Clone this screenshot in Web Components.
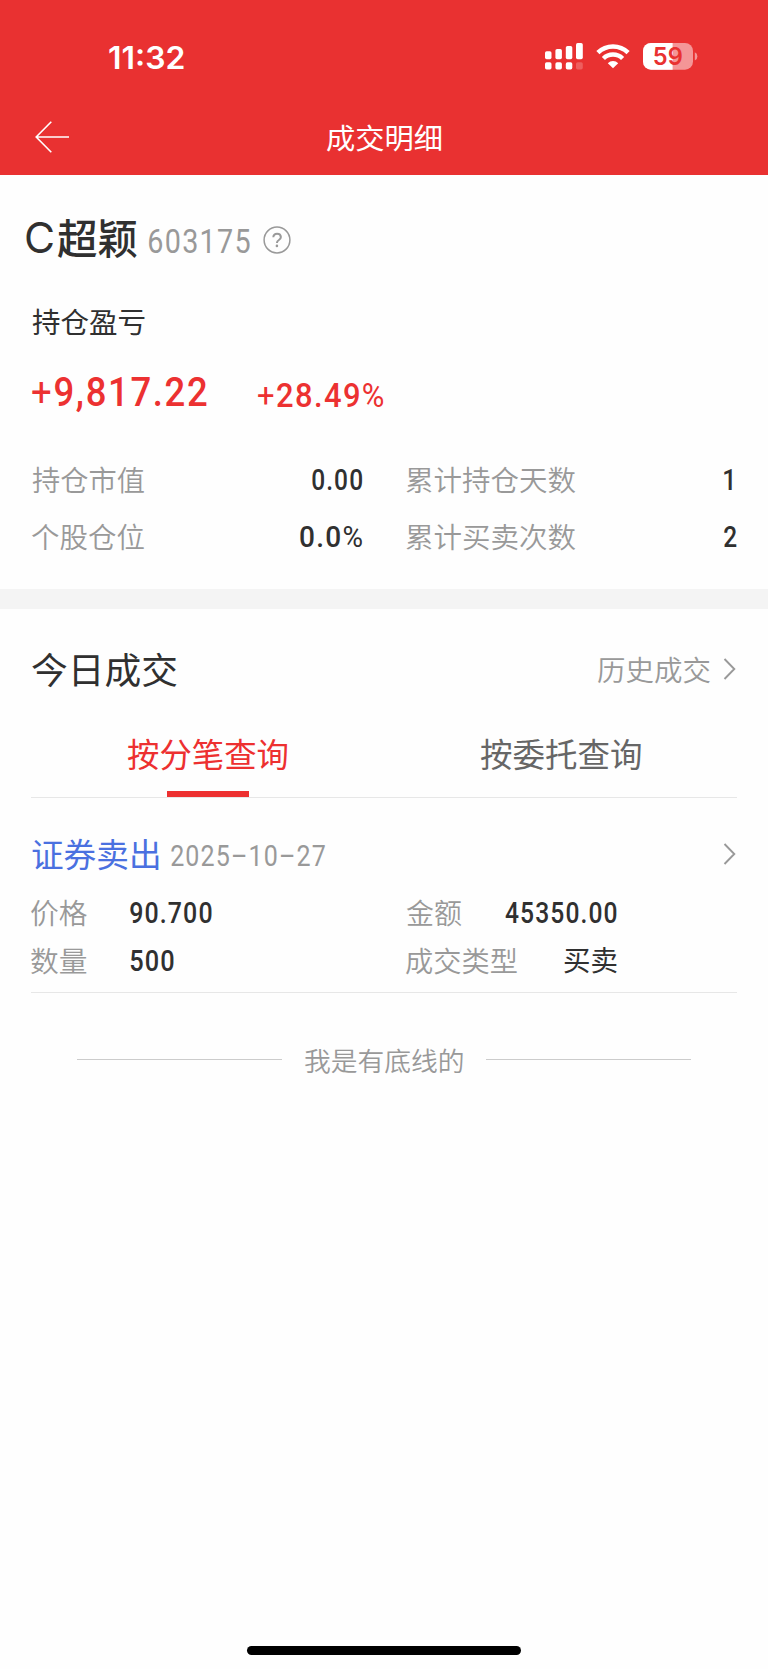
<!DOCTYPE html>
<html lang="zh-CN">
<head>
<meta charset="utf-8">
<title>成交明细</title>
<style>
html,body{margin:0;background:#fefefe}
body{font-family:"Noto Sans CJK SC",sans-serif;color:#303030}
</style>
</head>
<body>
<trade-page></trade-page>
<script>
const define = (name, html, ready) => {
  const t = document.createElement('template');
  t.innerHTML = html;
  customElements.define(name, class extends HTMLElement {
    connectedCallback() {
      if (this.shadowRoot) return;
      this.attachShadow({mode: 'open'}).append(t.content.cloneNode(true));
      if (ready) ready(this, this.shadowRoot);
    }
  });
};

// Text whose visible glyphs span exactly `w` pixels; `up` nudges the baseline.
const pen = document.createElement('canvas').getContext('2d');
define('fit-text', `<style>
:host{display:block;flex:none;white-space:nowrap;line-height:1.4}
span{display:inline-block;transform-origin:0 50%}
::slotted(b){font-weight:400}
</style><span><slot></slot></span>`, (el, root) => {
  const span = root.querySelector('span');
  const num = el.hasAttribute('num');
  const family = el.getAttribute('face') || (num ? 'Roboto' : 'Noto Sans CJK SC');
  const weight = el.getAttribute('weight') || (num ? '500' : '400');
  const size = +el.getAttribute('size');
  const w = +el.getAttribute('w');
  const gap = num ? size * 0.045 : 0;
  el.style.font = `${weight} ${size}px/1.4 "${family}","Noto Sans CJK SC",sans-serif`;
  span.style.letterSpacing = gap + 'px';
  pen.font = `${weight} ${size}px "${family}","Noto Sans CJK SC",sans-serif`;
  const m = pen.measureText(el.textContent);
  const k = w / (m.actualBoundingBoxLeft + m.actualBoundingBoxRight + gap * (el.textContent.length - 1));
  el.style.width = w + 'px';
  const up = +(el.getAttribute('up') || (num ? -0.8 : size * 0.02));
  span.style.transform = `translate(${m.actualBoundingBoxLeft * k}px,${-up}px) scaleX(${k})`;
});

define('chevron-icon', `<style>:host{display:block;flex:none;width:13px;height:22px}svg{display:block}</style>
<svg width="13" height="22" viewBox="0 0 13 22" fill="none" stroke="#999" stroke-width="1.9"><path d="M1.5 1 11.3 11 1.5 21"/></svg>`);

define('status-bar', `<style>
:host{display:flex;height:100px;box-sizing:border-box;padding:15px 69px 0 108.5px;align-items:center;justify-content:space-between;color:#fff}
.icons{display:flex;align-items:center;height:28px;margin-top:-2px}
svg{display:block}
.sig{margin-right:13px}.wifi{margin-right:13px}
</style>
<fit-text face="Inter" weight="600" size="31" w="75" up="0.5">11:32</fit-text>
<div class="icons">
<svg class="sig" width="38" height="27" fill="#fff"><rect x="0" y="8.3" width="6.5" height="8" rx="1.7"/><rect x="10.4" y="6" width="6.5" height="10.3" rx="1.7"/><rect x="20.8" y="3" width="6.5" height="13.3" rx="1.7"/><rect x="31" y="0" width="6.8" height="16.3" rx="1.7"/><rect x="0" y="19.2" width="6.5" height="7.3" rx="1.7"/><rect x="10.4" y="19.2" width="6.5" height="7.3" rx="1.7"/><rect x="20.8" y="19.2" width="6.5" height="7.3" rx="1.7"/><rect x="31" y="19.2" width="6.8" height="7.3" rx="1.7" opacity=".22"/></svg>
<svg class="wifi" width="34" height="27" viewBox="0 0 34 27" fill="none" stroke="#fff" stroke-width="4.5"><path d="M1.9 9.6A21.6 21.6 0 0 1 32.1 9.6"/><path d="M7.4 15.5A13.7 13.7 0 0 1 26.6 15.5"/><path d="M17 25.3 11.8 20.2A7.4 7.4 0 0 1 22.2 20.2Z" fill="#fff" stroke="none"/></svg>
<svg width="56" height="27" viewBox="0 0 56 27"><defs><clipPath id="b"><rect width="50" height="26.7" rx="8"/></clipPath></defs><g clip-path="url(#b)"><rect width="50" height="27" fill="#f49697"/><rect width="29.6" height="27" fill="#fff"/></g><path d="M51.8 9.2q2.6 1 2.6 4.2t-2.6 4.2z" fill="#f49697"/><text x="24.8" y="21.9" text-anchor="middle" font-family="Inter" font-weight="600" font-size="24" textLength="30" lengthAdjust="spacingAndGlyphs" fill="#e93131">59</text></svg>
</div>`);

define('nav-bar', `<style>
:host{display:grid;grid-template-columns:1fr auto 1fr;height:75px;box-sizing:border-box;padding:0 35px;align-items:center;color:#fff}
svg{display:block;margin-top:-1px}
</style>
<svg width="35" height="32" viewBox="0 0 35 32" fill="none" stroke="#fff" stroke-width="1.6"><path d="M16.3.8 1.2 16 16.3 31.2M1 16H34"/></svg>
<fit-text size="28.5" w="114.5">成交明细</fit-text><span></span>`);

define('stock-title', `<style>
:host{display:flex;align-items:center;height:126px;padding-left:26px}
.c{margin-right:4.3px}.n{margin-right:12px}.q{margin:4px 0 0 13px;display:block}
.code{color:#999;padding-top:6px}
</style>
<fit-text class="c" face="Inter" weight="400" size="42.5" w="27" up="-0.3">C</fit-text>
<fit-text class="n" weight="500" size="41" w="80" up="0.6">超颖</fit-text>
<fit-text class="code" num weight="400" size="33.3" w="101">603175</fit-text>
<svg class="q" width="28" height="28" viewBox="0 0 28 28" fill="none" stroke="#999"><circle cx="14" cy="14" r="12.9" stroke-width="1.5"/><path d="M10.3 11.3q.2-3.6 3.8-3.6t3.8 3.4q0 1.7-2 2.9-2 1.2-2 3" stroke-width="2"/><circle cx="13.9" cy="19.9" r="1.3" fill="#999" stroke="none"/></svg>`);

define('profit-summary', `<style>
:host{display:block;padding:0 31.5px}
.h{display:flex;align-items:center;height:41px}
.v{display:flex;align-items:center;height:100px;color:#ec3131}
.p{margin-left:52.5px;padding-top:6px}
</style>
<div class="h"><fit-text size="28.5" w="112.5">持仓盈亏</fit-text></div>
<div class="v"><fit-text num size="41.3" w="174" up="-1.4"><b>+</b>9,817.22</fit-text><fit-text class="p" num size="33" w="125"><b>+</b>28.49<b>%</b></fit-text></div>`);

define('stat-grid', `<style>
:host{display:grid;grid-template-columns:331px 331px;column-gap:43px;grid-auto-rows:57px;padding:9px 31.5px 24px;height:114px}
div{display:flex;justify-content:space-between;align-items:center}
.l{color:#999}
.one{margin-right:4px}
</style>
<div><fit-text class="l" size="28.5" weight="350" w="112.5">持仓市值</fit-text><fit-text num size="29.4" w="50.5">0.00</fit-text></div>
<div><fit-text class="l" size="28.5" weight="350" w="169.5">累计持仓天数</fit-text><fit-text class="one" num size="29.4" w="8.5">1</fit-text></div>
<div><fit-text class="l" size="28.5" weight="350" w="112.5">个股仓位</fit-text><fit-text num size="29.4" w="62.5">0.0<b>%</b></fit-text></div>
<div><fit-text class="l" size="28.5" weight="350" w="169.5">累计买卖次数</fit-text><fit-text num size="29.4" w="12.5">2</fit-text></div>`);

define('section-head', `<style>
:host{display:flex;align-items:center;justify-content:space-between;height:120px;padding:0 32px}
div{display:flex;align-items:center;color:#999;gap:12.5px}
</style>
<fit-text size="36.5" w="144.5" up="0.2">今日成交</fit-text>
<div><fit-text size="28.5" weight="350" w="112.5" up="-0.4">历史成交</fit-text><chevron-icon></chevron-icon></div>`);

define('query-tabs', `<style>
:host{display:grid;grid-template-columns:1fr 1fr;margin:0 31px;height:68px;border-bottom:1px solid #e7e7e7}
div{display:grid;grid-template-rows:50px 12px 6px;justify-items:center;align-items:center;color:#666}
.on{color:#ed3030}
i{grid-row:3;width:82px;height:6px;background:#ed3030;display:block}
</style>
<div class="on"><fit-text size="32.5" w="160.5">按分笔查询</fit-text><i></i></div>
<div><fit-text size="32.5" w="161">按委托查询</fit-text></div>`);

define('trade-record', `<style>
:host{display:block;margin:0 31px;border-bottom:1px solid #e7e7e7;height:194px}
.top{display:flex;align-items:center;height:72px;padding-top:20px}
.t{color:#4a70e0;margin:0 12.5px 0 .7px}.d{color:#999;padding-top:3px}
chevron-icon{margin:0 1px 0 auto}
.g{display:grid;grid-template-columns:374.5px 211px;grid-auto-rows:48px;margin-top:-1px}
.g div{display:flex;align-items:center}
.g div:nth-child(even){justify-content:space-between}
.l{color:#999}
.g div:nth-child(odd) .l{margin-right:42.5px}
</style>
<div class="top"><fit-text class="t" size="32.5" w="127">证券卖出</fit-text><fit-text class="d" num weight="400" size="29" w="154.5">2025–10–27</fit-text><chevron-icon></chevron-icon></div>
<div class="g">
<div><fit-text class="l" size="28.5" weight="350" w="56">价格</fit-text><fit-text num size="29.4" w="82">90.700</fit-text></div>
<div><fit-text class="l" size="28.5" weight="350" w="55.5">金额</fit-text><fit-text num size="29.4" w="112">45350.00</fit-text></div>
<div><fit-text class="l" size="28.5" weight="350" w="56">数量</fit-text><fit-text num size="29.4" w="44">500</fit-text></div>
<div><fit-text class="l" size="28.5" weight="350" w="111.5">成交类型</fit-text><fit-text size="28" w="53">买卖</fit-text></div>
</div>`);

define('list-end', `<style>
:host{display:flex;align-items:center;justify-content:center;gap:23px;height:133px;color:#999}
i{width:205px;height:1px;background:#ccc}
</style><i></i><fit-text size="26.5" weight="350" w="158" up="-0.2">我是有底线的</fit-text><i></i>`);

define('trade-page', `<style>
:host{display:flex;flex-direction:column;width:768px;height:1669px;overflow:hidden}
header{background:#e93131;height:175px;flex:none}
.band{height:20px;background:#f4f4f4;flex:none}
.home{width:274px;height:9px;border-radius:5px;background:#000;margin:auto auto 14.5px}
</style>
<header><status-bar></status-bar><nav-bar></nav-bar></header>
<stock-title></stock-title><profit-summary></profit-summary><stat-grid></stat-grid>
<div class="band"></div>
<section-head></section-head><query-tabs></query-tabs><trade-record></trade-record><list-end></list-end>
<div class="home"></div>`);
</script>
</body>
</html>
